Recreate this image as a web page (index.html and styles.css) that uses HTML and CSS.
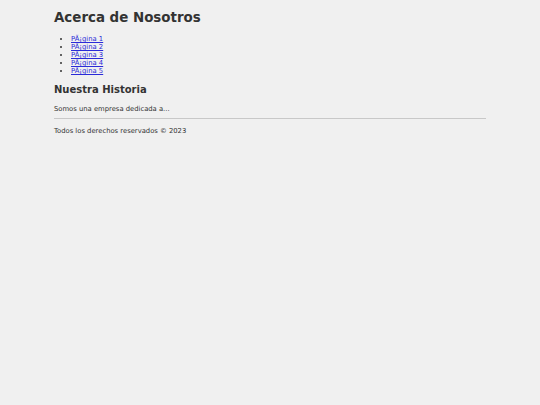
FILE: index.html
```html
<!DOCTYPE html>
<html lang="es">
<head>
<meta charset="utf-8">
<title>Acerca de Nosotros</title>
<link rel="stylesheet" href="styles.css">
</head>
<body>
<div class="page">
  <header class="site-header">
    <h1 class="title">Acerca de Nosotros</h1>
    <nav>
      <ul class="nav-list">
        <li><a href="#">PÃ¡gina 1</a></li>
        <li><a href="#">PÃ¡gina 2</a></li>
        <li><a href="#">PÃ¡gina 3</a></li>
        <li><a href="#">PÃ¡gina 4</a></li>
        <li><a href="#">PÃ¡gina 5</a></li>
      </ul>
    </nav>
  </header>
  <main class="content">
    <h2 class="section-title">Nuestra Historia</h2>
    <p class="text">Somos una empresa dedicada a...</p>
  </main>
  <footer class="site-footer">
    <p class="text">Todos los derechos reservados © 2023</p>
  </footer>
</div>
</body>
</html>
```
FILE: styles.css
```css
html, body {
  margin: 0;
  padding: 0;
  background: #f0f0f0;
}
body {
  font-family: "DejaVu Sans", sans-serif;
  font-size: 6.8px;
  color: #333;
}
.page {
  width: 432px;
  margin: 0 auto;
  padding-top: 9px;
}
.title {
  font-size: 13.4px;
  font-weight: bold;
  margin: 0 0 8px 0;
  line-height: 18px;
}
.nav-list {
  margin: 0;
  padding-left: 17px;
  line-height: 8px;
  font-size: 6.8px;
}
.nav-list a {
  color: #2a2ad8;
}
.section-title {
  font-size: 10px;
  font-weight: bold;
  margin: 8px 0 8px 0;
  line-height: 14px;
}
.content .text {
  margin: 0;
  line-height: 9px;
}
.site-footer {
  border-top: 1px solid #c8c8c8;
  margin-top: 4px;
  padding-top: 8px;
}
.site-footer .text {
  margin: 0;
  line-height: 9px;
}
```
